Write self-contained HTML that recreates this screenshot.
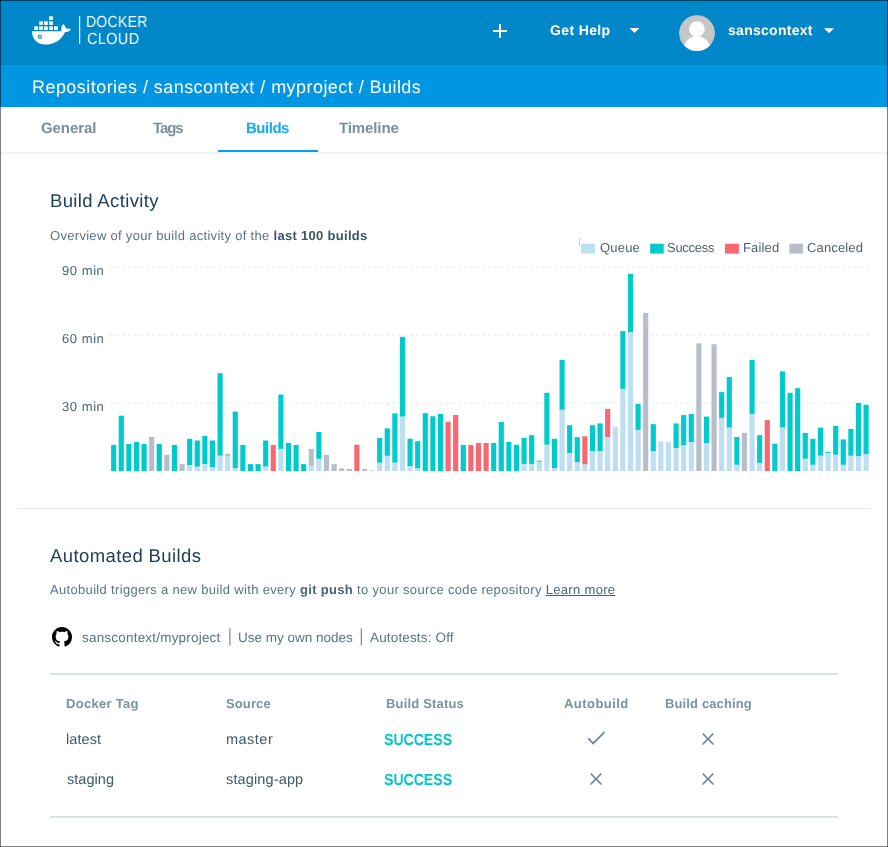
<!DOCTYPE html>
<html><head><meta charset="utf-8"><style>
html,body{margin:0;padding:0;}
body{width:888px;height:847px;overflow:hidden;background:#fff;position:relative;font-family:"Liberation Sans", sans-serif;}
.t{position:absolute;white-space:nowrap;line-height:1.117;text-rendering:geometricPrecision;will-change:transform;}
.abs{position:absolute;}
svg{position:absolute;left:0;top:0;}
</style></head><body>
<div class="abs" style="left:0;top:0;width:888px;height:65px;background:#0087c9;"></div>
<div class="abs" style="left:0;top:64px;width:888px;height:1px;background:#0085c5;"></div>
<div class="abs" style="left:0;top:65px;width:888px;height:42px;background:#0096e1;"></div>
<div class="abs" style="left:0;top:152px;width:888px;height:2px;background:#f2f4f5;"></div>
<div class="abs" style="left:218px;top:150px;width:100px;height:2px;background:#00a0fa;"></div>
<div class="abs" style="left:18px;top:508px;width:852px;height:1px;background:#e3e7ea;"></div>
<div class="abs" style="left:50px;top:673px;width:788px;height:2px;background:#dde2e6;"></div>
<div class="abs" style="left:50px;top:816px;width:788px;height:2px;background:#dde2e6;"></div>
<svg width="888" height="847" viewBox="0 0 888 847">
<g fill="#fff">
<rect x="49.2" y="16.3" width="3.7" height="3.6"/>
<rect x="39.1" y="21.3" width="3.8" height="3.6"/><rect x="44.1" y="21.3" width="3.7" height="3.6"/><rect x="49.2" y="21.3" width="3.7" height="3.6"/>
<rect x="34.3" y="26.3" width="3.7" height="3.7"/><rect x="39.1" y="26.3" width="3.8" height="3.7"/><rect x="44.1" y="26.3" width="3.7" height="3.7"/><rect x="49.2" y="26.3" width="3.7" height="3.7"/><rect x="54.1" y="26.3" width="3.8" height="3.7"/>
<path d="M32 31.2 H61.6 C61 29 61.6 25.2 63.2 24.2 C64.6 24.6 65.6 26.8 66 28.6 C68 28.4 70.2 28.8 71 29.4 C69.8 31 67.4 32 65.2 32 C61 40.5 54 44.6 45.5 44.6 C37 44.6 32 38.5 32 31.2 Z"/>
<rect x="79" y="16.2" width="1.2" height="27.8"/>
<rect x="493" y="30" width="14" height="2"/><rect x="499" y="24" width="2" height="14"/>
<path d="M629.5 27.9 L639.5 27.9 L634.5 32.9 Z"/>
<path d="M824 28.3 L834 28.3 L829 33.3 Z"/>
</g>
<circle cx="39.9" cy="36.8" r="1.6" fill="#fff" stroke="#0087c9" stroke-width="1.1"/>
<defs><clipPath id="av"><circle cx="697" cy="33.1" r="17.9"/></clipPath></defs>
<circle cx="697" cy="33.1" r="17.9" fill="#c6c6c6"/>
<g clip-path="url(#av)" fill="#fff">
<circle cx="696.9" cy="29.1" r="7.8"/>
<ellipse cx="697" cy="52.5" rx="14.2" ry="16.5"/>
</g>
<line x1="110" y1="267" x2="870" y2="267" stroke="#e3e7ea" stroke-width="1.2" stroke-dasharray="3 3"/>
<line x1="110" y1="335" x2="870" y2="335" stroke="#e3e7ea" stroke-width="1.2" stroke-dasharray="3 3"/>
<line x1="110" y1="403" x2="870" y2="403" stroke="#e3e7ea" stroke-width="1.2" stroke-dasharray="3 3"/>
<rect x="579" y="237.4" width="1" height="9" fill="#bcdff1"/>
<rect x="581.2" y="243.7" width="13.7" height="9.9" fill="#bcdff1"/>
<rect x="650.2" y="243.7" width="13.5" height="9.9" fill="#00cbcc"/>
<rect x="725" y="243.7" width="13.9" height="9.9" fill="#f96872"/>
<rect x="789.4" y="243.7" width="13.5" height="9.9" fill="#b8bec9"/>
<rect x="111.10" y="444.90" width="5.15" height="26.10" fill="#00cbcc"/>
<rect x="118.70" y="415.70" width="5.15" height="55.30" fill="#00cbcc"/>
<rect x="126.30" y="443.90" width="5.15" height="27.10" fill="#00cbcc"/>
<rect x="133.90" y="442.00" width="5.15" height="29.00" fill="#00cbcc"/>
<rect x="141.50" y="443.90" width="5.15" height="27.10" fill="#00cbcc"/>
<rect x="149.10" y="437.00" width="5.15" height="34.00" fill="#b8bec9"/>
<rect x="156.70" y="443.90" width="5.15" height="27.10" fill="#00cbcc"/>
<rect x="164.30" y="454.80" width="5.15" height="16.20" fill="#b8bec9"/>
<rect x="171.90" y="444.90" width="5.15" height="26.10" fill="#00cbcc"/>
<rect x="179.50" y="464.10" width="5.15" height="6.90" fill="#b8bec9"/>
<rect x="187.10" y="465.00" width="5.15" height="6.00" fill="#bcdff1"/>
<rect x="187.10" y="438.75" width="5.15" height="26.25" fill="#00cbcc"/>
<rect x="194.70" y="466.60" width="5.15" height="4.40" fill="#bcdff1"/>
<rect x="194.70" y="440.50" width="5.15" height="26.10" fill="#00cbcc"/>
<rect x="202.30" y="464.00" width="5.15" height="7.00" fill="#bcdff1"/>
<rect x="202.30" y="436.00" width="5.15" height="28.00" fill="#00cbcc"/>
<rect x="209.90" y="467.30" width="5.15" height="3.70" fill="#bcdff1"/>
<rect x="209.90" y="440.50" width="5.15" height="26.80" fill="#00cbcc"/>
<rect x="217.50" y="455.70" width="5.15" height="15.30" fill="#bcdff1"/>
<rect x="217.50" y="373.20" width="5.15" height="82.50" fill="#00cbcc"/>
<rect x="225.10" y="456.10" width="5.15" height="14.90" fill="#bcdff1"/>
<rect x="225.10" y="453.70" width="5.15" height="2.40" fill="#b8bec9"/>
<rect x="232.70" y="468.20" width="5.15" height="2.80" fill="#bcdff1"/>
<rect x="232.70" y="411.60" width="5.15" height="56.60" fill="#00cbcc"/>
<rect x="240.30" y="444.90" width="5.15" height="26.10" fill="#00cbcc"/>
<rect x="247.90" y="464.10" width="5.15" height="6.90" fill="#00cbcc"/>
<rect x="255.50" y="464.10" width="5.15" height="6.90" fill="#00cbcc"/>
<rect x="263.10" y="466.60" width="5.15" height="4.40" fill="#bcdff1"/>
<rect x="263.10" y="440.50" width="5.15" height="26.10" fill="#00cbcc"/>
<rect x="270.70" y="444.90" width="5.15" height="26.10" fill="#f96872"/>
<rect x="278.30" y="448.90" width="5.15" height="22.10" fill="#bcdff1"/>
<rect x="278.30" y="394.60" width="5.15" height="54.30" fill="#00cbcc"/>
<rect x="285.90" y="443.00" width="5.15" height="28.00" fill="#00cbcc"/>
<rect x="293.50" y="444.90" width="5.15" height="26.10" fill="#00cbcc"/>
<rect x="301.10" y="464.10" width="5.15" height="6.90" fill="#00cbcc"/>
<rect x="308.70" y="465.90" width="5.15" height="5.10" fill="#bcdff1"/>
<rect x="308.70" y="448.90" width="5.15" height="17.00" fill="#b8bec9"/>
<rect x="316.30" y="458.80" width="5.15" height="12.20" fill="#bcdff1"/>
<rect x="316.30" y="432.00" width="5.15" height="26.80" fill="#00cbcc"/>
<rect x="323.90" y="454.80" width="5.15" height="16.20" fill="#b8bec9"/>
<rect x="331.50" y="464.10" width="5.15" height="6.90" fill="#b8bec9"/>
<rect x="339.10" y="468.30" width="5.15" height="2.70" fill="#b8bec9"/>
<rect x="346.70" y="469.00" width="5.15" height="2.00" fill="#b8bec9"/>
<rect x="354.30" y="444.70" width="5.15" height="26.30" fill="#f96872"/>
<rect x="361.90" y="469.00" width="5.15" height="2.00" fill="#b8bec9"/>
<rect x="369.50" y="470.00" width="5.15" height="1.00" fill="#bcdff1"/>
<rect x="377.10" y="462.70" width="5.15" height="8.30" fill="#bcdff1"/>
<rect x="377.10" y="437.90" width="5.15" height="24.80" fill="#00cbcc"/>
<rect x="384.70" y="455.80" width="5.15" height="15.20" fill="#bcdff1"/>
<rect x="384.70" y="428.40" width="5.15" height="27.40" fill="#00cbcc"/>
<rect x="392.30" y="462.70" width="5.15" height="8.30" fill="#bcdff1"/>
<rect x="392.30" y="413.40" width="5.15" height="49.30" fill="#00cbcc"/>
<rect x="399.90" y="416.50" width="5.15" height="54.50" fill="#bcdff1"/>
<rect x="399.90" y="336.80" width="5.15" height="79.70" fill="#00cbcc"/>
<rect x="407.50" y="466.10" width="5.15" height="4.90" fill="#bcdff1"/>
<rect x="407.50" y="438.70" width="5.15" height="27.40" fill="#00cbcc"/>
<rect x="415.10" y="468.20" width="5.15" height="2.80" fill="#bcdff1"/>
<rect x="415.10" y="441.20" width="5.15" height="27.00" fill="#00cbcc"/>
<rect x="422.70" y="413.20" width="5.15" height="57.80" fill="#00cbcc"/>
<rect x="430.30" y="416.30" width="5.15" height="54.70" fill="#00cbcc"/>
<rect x="437.90" y="414.00" width="5.15" height="57.00" fill="#00cbcc"/>
<rect x="445.50" y="421.80" width="5.15" height="49.20" fill="#f96872"/>
<rect x="453.10" y="415.00" width="5.15" height="56.00" fill="#f96872"/>
<rect x="460.70" y="444.90" width="5.15" height="26.10" fill="#00cbcc"/>
<rect x="468.30" y="444.90" width="5.15" height="26.10" fill="#f96872"/>
<rect x="475.90" y="443.00" width="5.15" height="28.00" fill="#f96872"/>
<rect x="483.50" y="443.00" width="5.15" height="28.00" fill="#f96872"/>
<rect x="491.10" y="443.00" width="5.15" height="28.00" fill="#00cbcc"/>
<rect x="498.70" y="421.90" width="5.15" height="49.10" fill="#00cbcc"/>
<rect x="506.30" y="441.90" width="5.15" height="29.10" fill="#00cbcc"/>
<rect x="513.90" y="444.70" width="5.15" height="26.30" fill="#00cbcc"/>
<rect x="521.50" y="463.90" width="5.15" height="7.10" fill="#bcdff1"/>
<rect x="521.50" y="437.80" width="5.15" height="26.10" fill="#00cbcc"/>
<rect x="529.10" y="463.90" width="5.15" height="7.10" fill="#bcdff1"/>
<rect x="529.10" y="435.20" width="5.15" height="28.70" fill="#00cbcc"/>
<rect x="536.70" y="461.70" width="5.15" height="9.30" fill="#bcdff1"/>
<rect x="536.70" y="460.70" width="5.15" height="1.00" fill="#00cbcc"/>
<rect x="544.30" y="444.70" width="5.15" height="26.30" fill="#bcdff1"/>
<rect x="544.30" y="392.80" width="5.15" height="51.90" fill="#00cbcc"/>
<rect x="551.90" y="468.00" width="5.15" height="3.00" fill="#bcdff1"/>
<rect x="551.90" y="438.80" width="5.15" height="29.20" fill="#00cbcc"/>
<rect x="559.50" y="409.80" width="5.15" height="61.20" fill="#bcdff1"/>
<rect x="559.50" y="359.90" width="5.15" height="49.90" fill="#00cbcc"/>
<rect x="567.10" y="453.00" width="5.15" height="18.00" fill="#bcdff1"/>
<rect x="567.10" y="425.20" width="5.15" height="27.80" fill="#00cbcc"/>
<rect x="574.70" y="462.10" width="5.15" height="8.90" fill="#bcdff1"/>
<rect x="574.70" y="437.10" width="5.15" height="25.00" fill="#00cbcc"/>
<rect x="582.30" y="464.10" width="5.15" height="6.90" fill="#bcdff1"/>
<rect x="582.30" y="436.30" width="5.15" height="27.80" fill="#f96872"/>
<rect x="589.90" y="451.20" width="5.15" height="19.80" fill="#bcdff1"/>
<rect x="589.90" y="425.20" width="5.15" height="26.00" fill="#00cbcc"/>
<rect x="597.50" y="451.20" width="5.15" height="19.80" fill="#bcdff1"/>
<rect x="597.50" y="423.40" width="5.15" height="27.80" fill="#00cbcc"/>
<rect x="605.10" y="437.00" width="5.15" height="34.00" fill="#bcdff1"/>
<rect x="605.10" y="408.90" width="5.15" height="28.10" fill="#f96872"/>
<rect x="612.70" y="426.80" width="5.15" height="44.20" fill="#bcdff1"/>
<rect x="620.30" y="388.90" width="5.15" height="82.10" fill="#bcdff1"/>
<rect x="620.30" y="331.10" width="5.15" height="57.80" fill="#00cbcc"/>
<rect x="627.90" y="332.20" width="5.15" height="138.80" fill="#bcdff1"/>
<rect x="627.90" y="273.80" width="5.15" height="58.40" fill="#00cbcc"/>
<rect x="635.50" y="429.90" width="5.15" height="41.10" fill="#bcdff1"/>
<rect x="635.50" y="403.90" width="5.15" height="26.00" fill="#00cbcc"/>
<rect x="643.10" y="312.90" width="5.15" height="158.10" fill="#b8bec9"/>
<rect x="650.70" y="451.20" width="5.15" height="19.80" fill="#bcdff1"/>
<rect x="650.70" y="424.20" width="5.15" height="27.00" fill="#00cbcc"/>
<rect x="658.30" y="441.30" width="5.15" height="29.70" fill="#bcdff1"/>
<rect x="665.90" y="442.10" width="5.15" height="28.90" fill="#bcdff1"/>
<rect x="673.50" y="448.10" width="5.15" height="22.90" fill="#bcdff1"/>
<rect x="673.50" y="423.50" width="5.15" height="24.60" fill="#00cbcc"/>
<rect x="681.10" y="445.20" width="5.15" height="25.80" fill="#bcdff1"/>
<rect x="681.10" y="415.10" width="5.15" height="30.10" fill="#00cbcc"/>
<rect x="688.70" y="442.10" width="5.15" height="28.90" fill="#bcdff1"/>
<rect x="688.70" y="414.10" width="5.15" height="28.00" fill="#00cbcc"/>
<rect x="696.30" y="343.40" width="5.15" height="127.60" fill="#b8bec9"/>
<rect x="703.90" y="443.00" width="5.15" height="28.00" fill="#bcdff1"/>
<rect x="703.90" y="416.60" width="5.15" height="26.40" fill="#00cbcc"/>
<rect x="711.50" y="344.20" width="5.15" height="126.80" fill="#b8bec9"/>
<rect x="719.10" y="417.90" width="5.15" height="53.10" fill="#bcdff1"/>
<rect x="719.10" y="392.10" width="5.15" height="25.80" fill="#00cbcc"/>
<rect x="726.70" y="427.50" width="5.15" height="43.50" fill="#bcdff1"/>
<rect x="726.70" y="376.90" width="5.15" height="50.60" fill="#00cbcc"/>
<rect x="734.30" y="464.80" width="5.15" height="6.20" fill="#bcdff1"/>
<rect x="734.30" y="437.10" width="5.15" height="27.70" fill="#00cbcc"/>
<rect x="741.90" y="432.90" width="5.15" height="38.10" fill="#b8bec9"/>
<rect x="749.50" y="413.90" width="5.15" height="57.10" fill="#bcdff1"/>
<rect x="749.50" y="359.90" width="5.15" height="54.00" fill="#00cbcc"/>
<rect x="757.10" y="462.90" width="5.15" height="8.10" fill="#bcdff1"/>
<rect x="757.10" y="435.20" width="5.15" height="27.70" fill="#00cbcc"/>
<rect x="764.70" y="420.10" width="5.15" height="50.90" fill="#f96872"/>
<rect x="772.30" y="443.70" width="5.15" height="27.30" fill="#00cbcc"/>
<rect x="779.90" y="427.50" width="5.15" height="43.50" fill="#bcdff1"/>
<rect x="779.90" y="371.40" width="5.15" height="56.10" fill="#00cbcc"/>
<rect x="787.50" y="392.80" width="5.15" height="78.20" fill="#00cbcc"/>
<rect x="795.10" y="388.20" width="5.15" height="82.80" fill="#00cbcc"/>
<rect x="802.70" y="458.80" width="5.15" height="12.20" fill="#bcdff1"/>
<rect x="802.70" y="432.90" width="5.15" height="25.90" fill="#00cbcc"/>
<rect x="810.30" y="464.80" width="5.15" height="6.20" fill="#bcdff1"/>
<rect x="810.30" y="438.75" width="5.15" height="26.05" fill="#00cbcc"/>
<rect x="817.90" y="455.70" width="5.15" height="15.30" fill="#bcdff1"/>
<rect x="817.90" y="427.60" width="5.15" height="28.10" fill="#00cbcc"/>
<rect x="825.50" y="453.10" width="5.15" height="17.90" fill="#bcdff1"/>
<rect x="825.50" y="452.10" width="5.15" height="1.00" fill="#00cbcc"/>
<rect x="833.10" y="454.80" width="5.15" height="16.20" fill="#bcdff1"/>
<rect x="833.10" y="425.90" width="5.15" height="28.90" fill="#00cbcc"/>
<rect x="840.70" y="464.80" width="5.15" height="6.20" fill="#bcdff1"/>
<rect x="840.70" y="439.40" width="5.15" height="25.40" fill="#00cbcc"/>
<rect x="848.30" y="455.70" width="5.15" height="15.30" fill="#bcdff1"/>
<rect x="848.30" y="429.00" width="5.15" height="26.70" fill="#00cbcc"/>
<rect x="855.90" y="456.10" width="5.15" height="14.90" fill="#bcdff1"/>
<rect x="855.90" y="403.00" width="5.15" height="53.10" fill="#00cbcc"/>
<rect x="863.50" y="454.00" width="5.15" height="17.00" fill="#bcdff1"/>
<rect x="863.50" y="404.80" width="5.15" height="49.20" fill="#00cbcc"/>
<g transform="translate(52,627) scale(1.25)"><path d="M8 0C3.58 0 0 3.58 0 8c0 3.54 2.29 6.53 5.47 7.59.4.07.55-.17.55-.38 0-.19-.01-.82-.01-1.49-2.01.37-2.53-.49-2.69-.94-.09-.23-.48-.94-.82-1.130-.28-.15-.68-.52-.01-.53.63-.01 1.08.58 1.23.82.72 1.21 1.87.87 2.33.66.07-.52.28-.87.51-1.07-1.78-.2-3.640-.89-3.64-3.95 0-.87.31-1.59.82-2.15-.08-.2-.36-1.02.08-2.12 0 0 .67-.21 2.2.82.64-.18 1.32-.27 2-.27.68 0 1.36.09 2 .27 1.53-1.04 2.2-.82 2.2-.82.44 1.1.16 1.92.08 2.12.51.56.82 1.27.82 2.15 0 3.07-1.87 3.75-3.65 3.95.29.25.54.73.54 1.48 0 1.07-.01 1.93-.01 2.2 0 .21.15.46.55.38A8.013 8.013 0 0016 8c0-4.42-3.58-8-8-8z" fill="#000"/></g>
<rect x="229.4" y="628.3" width="1" height="17.2" fill="#5b7282"/>
<rect x="360.8" y="628.3" width="1" height="17.2" fill="#5b7282"/>
<g fill="none" stroke="#71899a" stroke-width="1.9" stroke-linecap="round" stroke-linejoin="miter">
<path d="M588.8 738.9 L593.2 743.4 L604 732.6"/>
</g>
<g fill="none" stroke="#71899a" stroke-width="1.7" stroke-linecap="round">
<path d="M703.1 734 L712.9 743.8 M712.9 734 L703.1 743.8"/>
<path d="M591.1 774 L600.9 783.8 M600.9 774 L591.1 783.8"/>
<path d="M703.1 774 L712.9 783.8 M712.9 774 L703.1 783.8"/>
</g>
</svg>
<div id="docker" class="t" style="left:86.20px;top:13.92px;font-size:16px;font-weight:400;color:#ffffff;letter-spacing:0.3px;transform:scaleX(0.876);transform-origin:0 0;">DOCKER</div>
<div id="cloud" class="t" style="left:87.20px;top:31.02px;font-size:16px;font-weight:400;color:#ffffff;letter-spacing:0.3px;transform:scaleX(0.911);transform-origin:0 0;">CLOUD</div>
<div id="gethelp" class="t" style="left:550.00px;top:23.03px;font-size:14px;font-weight:700;color:#ffffff;letter-spacing:0.373px;">Get Help</div>
<div id="user" class="t" style="left:728.20px;top:23.33px;font-size:14px;font-weight:700;color:#ffffff;letter-spacing:0.28px;">sanscontext</div>
<div id="crumb" class="t" style="left:32.30px;top:77.31px;font-size:18px;font-weight:400;color:#ffffff;letter-spacing:0.449px;">Repositories / sanscontext / myproject / Builds</div>
<div id="tab1" class="t" style="left:40.90px;top:120.62px;font-size:15px;font-weight:700;color:#7a8e9b;letter-spacing:-0.068px;">General</div>
<div id="tab2" class="t" style="left:152.70px;top:120.62px;font-size:15px;font-weight:700;color:#7a8e9b;letter-spacing:-1.066px;">Tags</div>
<div id="tab3" class="t" style="left:246.20px;top:120.62px;font-size:15px;font-weight:700;color:#16a8f6;letter-spacing:-0.48px;">Builds</div>
<div id="tab4" class="t" style="left:338.60px;top:120.62px;font-size:15px;font-weight:700;color:#7a8e9b;letter-spacing:-0.113px;">Timeline</div>
<div id="h1" class="t" style="left:50.10px;top:191.26px;font-size:18.5px;font-weight:400;color:#22405a;letter-spacing:0.353px;">Build Activity</div>
<div id="overview" class="t" style="left:50.00px;top:228.74px;font-size:13px;font-weight:400;color:#5b7282;letter-spacing:0.302px;">Overview of your build activity of the <b style="font-weight:700;color:#3b5468">last 100 builds</b></div>
<div id="lq" class="t" style="left:599.70px;top:240.74px;font-size:13px;font-weight:400;color:#4b6374;letter-spacing:0.2px;">Queue</div>
<div id="ls" class="t" style="left:667.20px;top:240.74px;font-size:13px;font-weight:400;color:#4b6374;letter-spacing:-0.266px;">Success</div>
<div id="lf" class="t" style="left:742.60px;top:240.74px;font-size:13px;font-weight:400;color:#4b6374;letter-spacing:0.16px;">Failed</div>
<div id="lc" class="t" style="left:806.60px;top:240.74px;font-size:13px;font-weight:400;color:#4b6374;letter-spacing:0.143px;">Canceled</div>
<div id="y90" class="t" style="left:62.10px;top:264.13px;font-size:13px;font-weight:400;color:#4b6374;letter-spacing:0.56px;">90 min</div>
<div id="y60" class="t" style="left:62.10px;top:331.84px;font-size:13px;font-weight:400;color:#4b6374;letter-spacing:0.56px;">60 min</div>
<div id="y30" class="t" style="left:62.10px;top:399.84px;font-size:13px;font-weight:400;color:#4b6374;letter-spacing:0.56px;">30 min</div>
<div id="h2" class="t" style="left:50.30px;top:546.36px;font-size:18.5px;font-weight:400;color:#22405a;letter-spacing:0.4px;">Automated Builds</div>
<div id="auto" class="t" style="left:50.30px;top:583.34px;font-size:13px;font-weight:400;color:#5b7282;letter-spacing:0.326px;">Autobuild triggers a new build with every <b style="font-weight:700;color:#4b6374">git push</b> to your source code repository <u style="color:#4b6374">Learn more</u></div>
<div id="repo" class="t" style="left:82.20px;top:630.28px;font-size:13.5px;font-weight:400;color:#5b7282;letter-spacing:0.2px;">sanscontext/myproject</div>
<div id="nodes" class="t" style="left:237.90px;top:630.28px;font-size:13.5px;font-weight:400;color:#5b7282;letter-spacing:-0.0px;">Use my own nodes</div>
<div id="tests" class="t" style="left:369.80px;top:630.28px;font-size:13.5px;font-weight:400;color:#5b7282;letter-spacing:0.154px;">Autotests: Off</div>
<div id="th1" class="t" style="left:66.40px;top:697.24px;font-size:13px;font-weight:700;color:#7d919e;letter-spacing:0.288px;">Docker Tag</div>
<div id="th2" class="t" style="left:225.50px;top:697.24px;font-size:13px;font-weight:700;color:#7d919e;letter-spacing:0.12px;">Source</div>
<div id="th3" class="t" style="left:385.90px;top:697.24px;font-size:13px;font-weight:700;color:#7d919e;letter-spacing:0.182px;">Build Status</div>
<div id="th4" class="t" style="left:563.80px;top:697.24px;font-size:13px;font-weight:700;color:#7d919e;letter-spacing:0.453px;">Autobuild</div>
<div id="th5" class="t" style="left:664.70px;top:697.24px;font-size:13px;font-weight:700;color:#7d919e;letter-spacing:0.132px;">Build caching</div>
<div id="r1c1" class="t" style="left:66.40px;top:731.68px;font-size:14.5px;font-weight:400;color:#3f5a6d;letter-spacing:0.08px;">latest</div>
<div id="r1c2" class="t" style="left:225.50px;top:731.68px;font-size:14.5px;font-weight:400;color:#3f5a6d;letter-spacing:0.48px;">master</div>
<div id="r1c3" class="t" style="left:383.80px;top:731.52px;font-size:16px;font-weight:700;color:#00c2c7;letter-spacing:0px;transform:scaleX(0.88);transform-origin:0 0;">SUCCESS</div>
<div id="r2c1" class="t" style="left:66.60px;top:772.48px;font-size:14.5px;font-weight:400;color:#3f5a6d;letter-spacing:0.033px;">staging</div>
<div id="r2c2" class="t" style="left:225.50px;top:772.48px;font-size:14.5px;font-weight:400;color:#3f5a6d;letter-spacing:0.14px;">staging-app</div>
<div id="r2c3" class="t" style="left:383.80px;top:771.52px;font-size:16px;font-weight:700;color:#00c2c7;letter-spacing:0px;transform:scaleX(0.88);transform-origin:0 0;">SUCCESS</div>
<div class="abs" style="left:0;top:0;width:886px;height:847px;border-left:1px solid rgba(0,0,0,.5);border-right:1px solid rgba(0,0,0,.5);"></div>
<div class="abs" style="left:0;top:0;width:888px;height:845px;border-top:1px solid rgba(0,0,0,.5);border-bottom:1px solid rgba(0,0,0,.5);"></div>
</body></html>
